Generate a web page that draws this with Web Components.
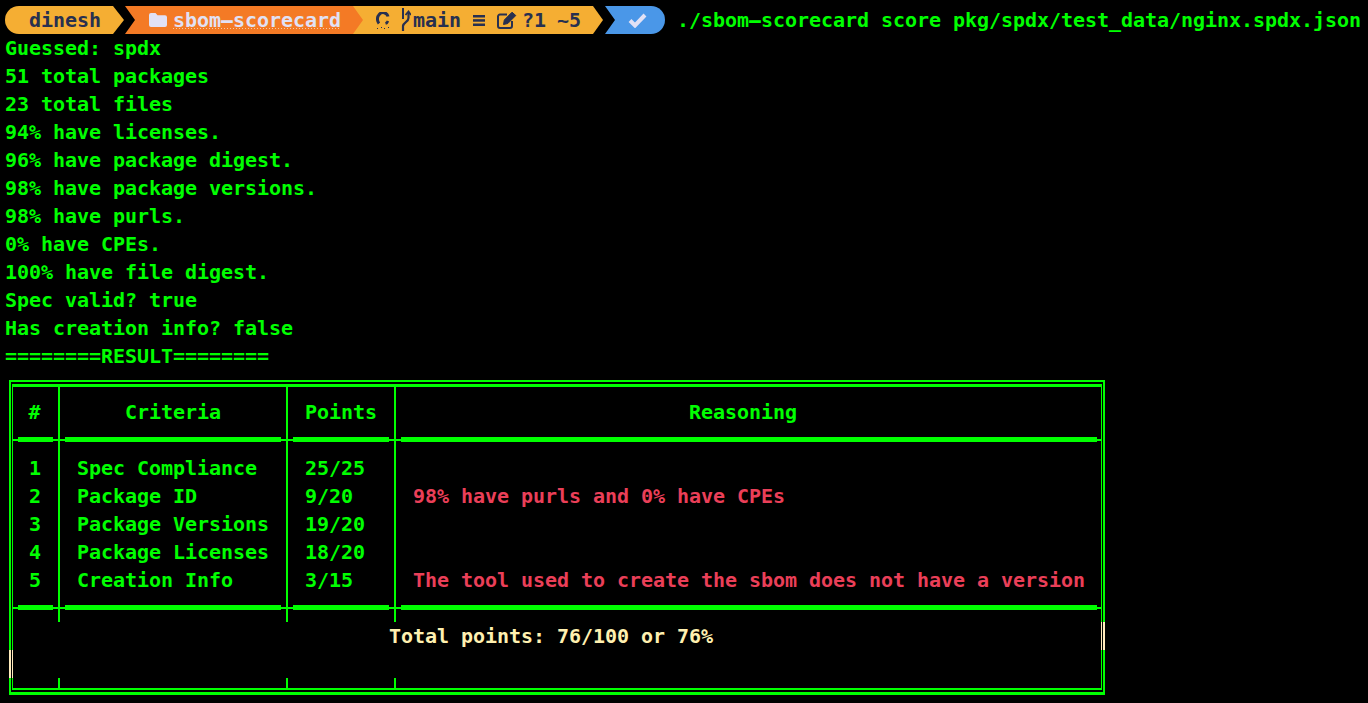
<!DOCTYPE html>
<html>
<head>
<meta charset="utf-8">
<title>sbom-scorecard</title>
<style>
    html, body { margin: 0; background: #000; }
    body {
        font: bold 20px/28px "DejaVu Sans Mono", monospace;
        letter-spacing: -0.04px;
        color: #0f0;
        height: 703px;
        overflow: hidden;
    }
</style>
</head>
<body>
<prompt-bar>./sbom<wide-dash></wide-dash>scorecard score pkg/spdx/test_data/nginx.spdx.json</prompt-bar>
<term-line>Guessed: spdx</term-line>
<term-line>51 total packages</term-line>
<term-line>23 total files</term-line>
<term-line>94% have licenses.</term-line>
<term-line>96% have package digest.</term-line>
<term-line>98% have package versions.</term-line>
<term-line>98% have purls.</term-line>
<term-line>0% have CPEs.</term-line>
<term-line>100% have file digest.</term-line>
<term-line>Spec valid? true</term-line>
<term-line>Has creation info? false</term-line>
<term-line>========RESULT========</term-line>
<score-table total="Total points: 76/100 or 76%">
    <score-row heading num="#" criteria="Criteria" points="Points" reason="Reasoning"></score-row>
    <score-rule></score-rule>
    <score-row spacer="12"></score-row>
    <score-row num="1" criteria="Spec Compliance" points="25/25"></score-row>
    <score-row num="2" criteria="Package ID" points="9/20" reason="98% have purls and 0% have CPEs"></score-row>
    <score-row num="3" criteria="Package Versions" points="19/20"></score-row>
    <score-row num="4" criteria="Package Licenses" points="18/20"></score-row>
    <score-row num="5" criteria="Creation Info" points="3/15" reason="The tool used to create the sbom does not have a version"></score-row>
    <score-row spacer="11"></score-row>
    <score-rule></score-rule>
    <score-row spacer="12"></score-row>
</score-table>

<script>
class WideDash extends HTMLElement {
    constructor() {
        super();
        this.attachShadow({ mode: 'open' });
        this.shadowRoot.innerHTML = `
            <style>
                :host { display: inline-block; width: 12px; text-align: center; transform: scaleX(1.9); }
            </style>-`;
    }
}

class TermLine extends HTMLElement {
    constructor() {
        super();
        this.attachShadow({ mode: 'open' });
        this.shadowRoot.innerHTML = `
            <style>
                :host { display: block; height: 28px; padding-left: 5px; white-space: nowrap; }
            </style>
            <slot></slot>`;
    }
}

class PromptBar extends HTMLElement {
    constructor() {
        super();
        this.attachShadow({ mode: 'open' });
        this.shadowRoot.innerHTML = `
            <style>
                :host {
                    display: flex;
                    height: 28px;
                    margin-top: 6px;
                    padding-left: 5px;
                    white-space: nowrap;
                }
                .seg {
                    position: relative;
                    display: flex;
                    align-items: center;
                    height: 28px;
                    box-sizing: border-box;
                    color: #283050;
                }
                svg { display: block; flex: none; }
                .user {
                    width: 119px;
                    padding-left: 24px;
                    margin-right: 1px;
                    background: #f5ae33;
                    border-radius: 14px 0 0 14px;
                    clip-path: polygon(0 0, 108px 0, 100% 50%, 108px 100%, 0 100%);
                }
                .dir {
                    z-index: 1;
                    width: 238px;
                    padding-left: 24px;
                    background: #f47a25;
                    color: #e1e1f5;
                    clip-path: polygon(0 0, 228px 0, 100% 50%, 228px 100%, 0 100%, 10px 50%);
                }
                .dir span {
                    margin-left: 6px;
                    background: repeating-linear-gradient(90deg, #f3c9a8 0 1px, transparent 1px 3px) 0 22px / 100% 1px no-repeat;
                }
                .git {
                    width: 250px;
                    margin-left: -10px;
                    padding-left: 23px;
                    background: #f5ae33;
                    clip-path: polygon(0 0, 240px 0, 100% 50%, 240px 100%, 0 100%);
                }
                .status {
                    width: 60px;
                    margin: 0 12px 0 2px;
                    padding-left: 23px;
                    background: #4a97e8;
                    border-radius: 0 14px 14px 0;
                    clip-path: polygon(0 0, 100% 0, 100% 100%, 0 100%, 10px 50%);
                }
                .cmd { color: #0f0; line-height: 28px; }
            </style>
            <div class="seg user">dinesh</div>
            <div class="seg dir">
                <svg width="18" height="14" viewBox="0 0 18 14" fill="#e1e1f5">
                    <path d="M0 2a2 2 0 0 1 2-2h4.500l2 2.200H16a2 2 0 0 1 2 2V12a2 2 0 0 1-2 2H2a2 2 0 0 1-2-2z"/>
                </svg>
                <span>sbom<wide-dash></wide-dash>scorecard</span>
            </div>
            <div class="seg git">
                <svg width="14" height="18" viewBox="0 0 14 18" fill="none" stroke="#283050" style="margin-top:2px">
                    <path d="M12 4.500A5 5 0 0 0 3.200 2.500C.8 5 1 9 3 11.500" stroke-width="3"/>
                    <path d="M9.500 11.500A4 4 0 0 0 12 9" stroke-width="2.500"/>
                    <path d="M1 16.500h1M5 15.500h1M8 16.500h1M12 15.500h1" stroke-width="1"/>
                </svg>
                <svg width="10" height="24" viewBox="0 0 10 24" fill="none" stroke="#283050" style="margin-left:11px">
                    <path d="M2 0v11" stroke-width="2"/>
                    <path d="M7.500 4v6c0 4-5 4-5.500 8v5" stroke-width="2.200"/>
                    <path d="M4.500 7l3-3.500 2.500 3.500" stroke-width="1.800"/>
                </svg>
                <span style="margin-left:2px">main</span>
                <svg width="12" height="11" viewBox="0 0 12 11" fill="#283050" style="margin-left:12px">
                    <rect width="12" height="2.500"/>
                    <rect y="4.200" width="12" height="2.500"/>
                    <rect y="8.500" width="12" height="2.500"/>
                </svg>
                <svg width="20" height="18" viewBox="0 0 20 18" fill="none" stroke="#283050" style="margin-left:12px;margin-top:-1px">
                    <path d="M10 3.500H3a2 2 0 0 0-2 2V15a2 2 0 0 0 2 2h10a2 2 0 0 0 2-2V10" stroke-width="2"/>
                    <path d="M6.500 13.500l.8-4.500L15 1.200l3.800 3.300-8 8z" fill="#283050" stroke-width="1"/>
                </svg>
                <span style="margin-left:5px">?1</span>
                <span style="margin-left:11px">~5</span>
            </div>
            <div class="seg status">
                <svg width="19" height="15" viewBox="0 0 19 15" fill="none" stroke="#e1e1f5" stroke-width="4">
                    <path d="M2 7.500l5 5L17 2"/>
                </svg>
            </div>
            <div class="cmd"><slot></slot></div>`;
    }
}

class ScoreTable extends HTMLElement {
    constructor() {
        super();
        this.attachShadow({ mode: 'open' });
        this.shadowRoot.innerHTML = `
            <style>
                :host {
                    display: block;
                    position: relative;
                    width: 1096px;
                    margin: 10px 0 0 9px;
                    box-sizing: border-box;
                    padding: 2px 1px;
                    border: solid #0f0;
                    border-width: 2px 2px 3px;
                }
                .inner {
                    border: solid #0f0;
                    border-width: 3px 1px 2px;
                }
                .total {
                    height: 56px;
                    padding-left: 376px;
                    color: #fff0b0;
                }
                .cream {
                    position: absolute;
                    width: 2px;
                    height: 28px;
                    background: #ffecbc;
                }
                .cream.thin { width: 1px; }
            </style>
            <div class="inner">
                <slot></slot>
                <div class="total"></div>
                <score-row spacer="10"></score-row>
            </div>
            <div class="cream" style="left:-2px;top:268px"></div>
            <div class="cream thin" style="left:1px;top:268px"></div>
            <div class="cream thin" style="right:1px;top:240px"></div>
            <div class="cream" style="right:-2px;top:240px"></div>`;
        this.shadowRoot.querySelector('.total').textContent = this.getAttribute('total');
    }
}

const COLUMNS = 'grid-template-columns: 47px 228px 108px 1fr;';

class ScoreRow extends HTMLElement {
    constructor() {
        super();
        this.attachShadow({ mode: 'open' });
        const spacer = this.getAttribute('spacer');
        this.shadowRoot.innerHTML = `
            <style>
                :host { display: grid; ${COLUMNS} white-space: nowrap; }
                div { box-sizing: border-box; border-right: 2px solid #0f0; height: 28px; padding-left: 17px; }
                div:last-child { border-right: 0; }
                .num { padding-left: 16px; }
                .reason { color: #ea3f58; }
                :host([heading]) div { height: 50px; padding: 11px 0 0; text-align: center; }
                :host([heading]) .num { padding: 11px 2px 0 0; }
                :host([heading]) .reason { color: inherit; padding-right: 11px; }
            </style>
            <div class="num"></div><div class="criteria"></div><div class="points"></div><div class="reason"></div>`;
        for (const name of ['num', 'criteria', 'points', 'reason']) {
            const cell = this.shadowRoot.querySelector('.' + name);
            cell.textContent = this.getAttribute(name) || '';
            if (spacer) cell.style.height = spacer + 'px';
        }
    }
}

class ScoreRule extends HTMLElement {
    constructor() {
        super();
        this.attachShadow({ mode: 'open' });
        this.shadowRoot.innerHTML = `
            <style>
                :host { display: grid; ${COLUMNS} height: 5px; }
                .cell {
                    box-sizing: border-box;
                    padding: 0 5px;
                    border-right: 2px solid #0f0;
                    background: linear-gradient(#0f0, #0f0) 0 50% / 100% 2px no-repeat;
                }
                .cell:first-child { padding-left: 4px; }
                .cell:last-child { padding-right: 4px; border-right: 0; }
                .cell i { display: block; height: 5px; background: #0f0; }
            </style>
            <div class="cell"><i></i></div>
            <div class="cell"><i></i></div>
            <div class="cell"><i></i></div>
            <div class="cell"><i></i></div>`;
    }
}

customElements.define('wide-dash', WideDash);
customElements.define('term-line', TermLine);
customElements.define('prompt-bar', PromptBar);
customElements.define('score-row', ScoreRow);
customElements.define('score-rule', ScoreRule);
customElements.define('score-table', ScoreTable);
</script>
</body>
</html>
